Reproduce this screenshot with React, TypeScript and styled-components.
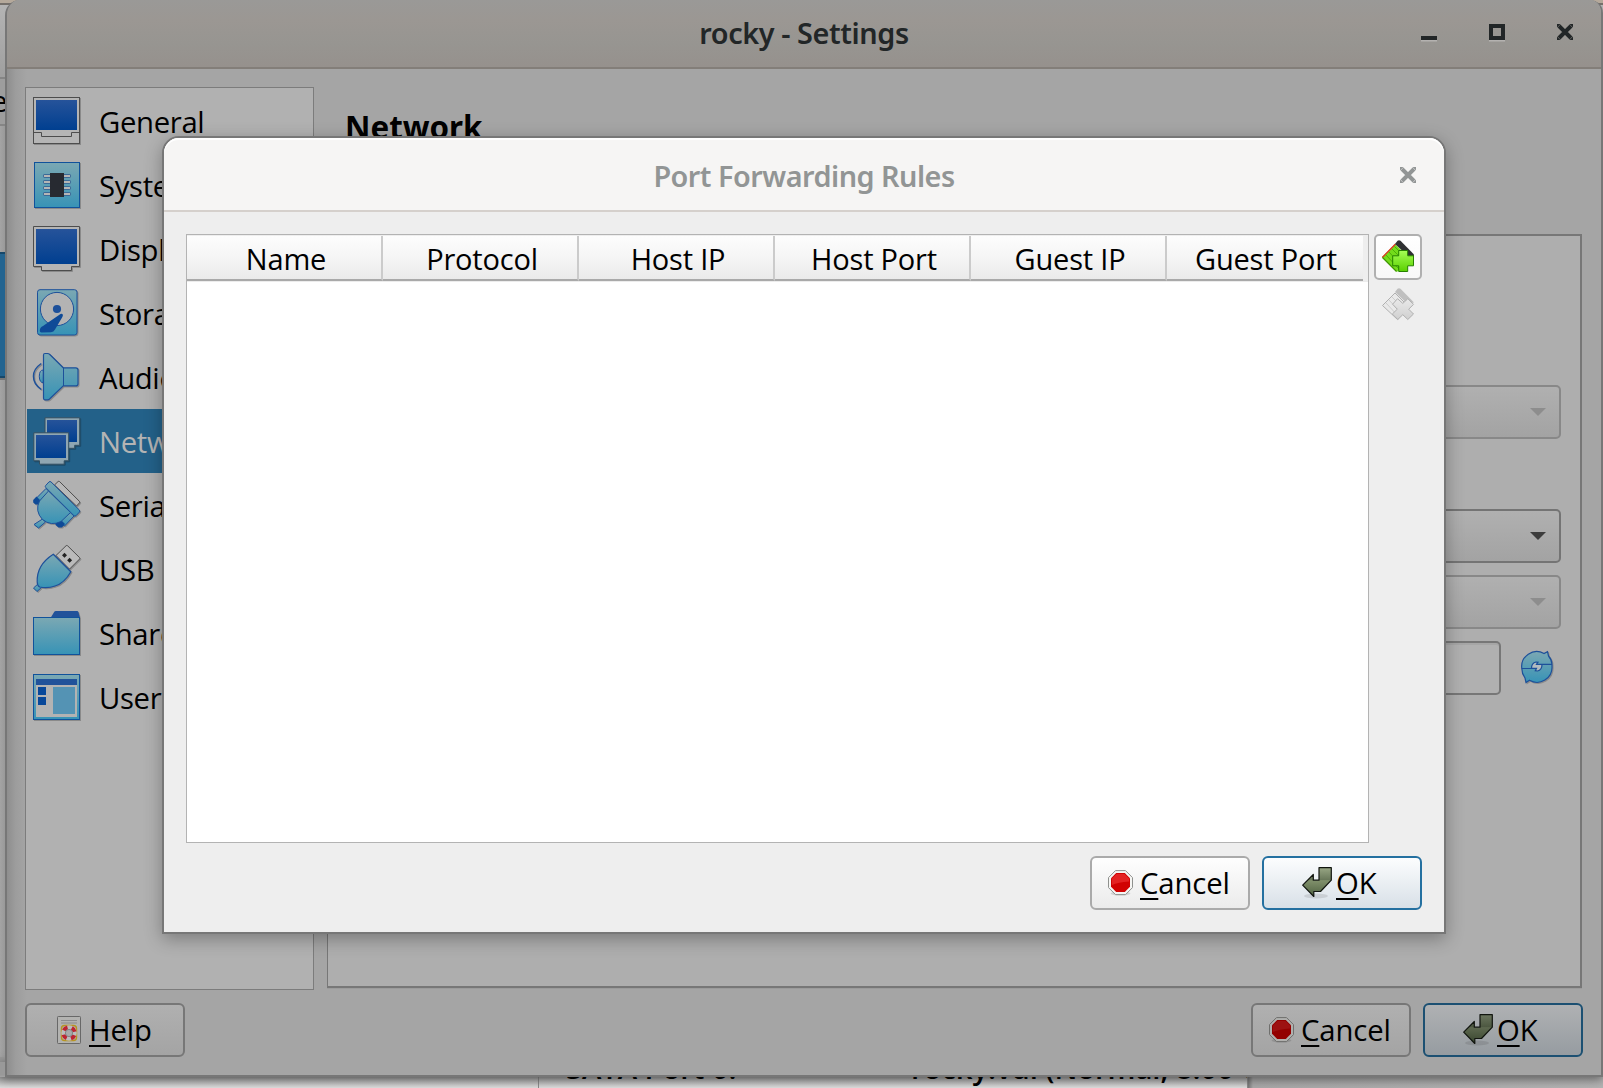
import React from 'react';
import styled, { createGlobalStyle, css } from 'styled-components';

const GlobalStyle = createGlobalStyle`
  * { box-sizing: border-box; }
  body { margin: 0; overflow: hidden; background: #9d9d9d; }
`;

const uiFont = css`
  font-family: 'Open Sans', 'Noto Sans', sans-serif;
  font-size: 29.3px;
  font-weight: 460;
  line-height: 40px;
  color: #000;
  white-space: nowrap;
`;

const Desktop = styled.main`
  position: relative;
  width: 1603px;
  height: 1088px;
  overflow: hidden;
  ${uiFont}
`;

/* ---------- window behind ---------- */

const Manager = styled.section`
  display: flex;
  flex-direction: column;
  height: 1088px;
  background: linear-gradient(90deg, #a4a4a4 0, #999 5px, #999 1598px, #a4a4a4 100%);
`;
const ManagerEdge = styled.div`
  height: 5px;
  background: #b5a99b;
  border-bottom: 2px solid #75706b;
`;
const ManagerToolbar = styled.div`
  height: 74px;
  background: linear-gradient(#b4b4b4, #9f9f9f);
  border-bottom: 2px solid #858585;
`;
const ManagerHeading = styled.div`
  display: flex;
  height: 47px;
  padding-top: 2px;
  margin-left: -9px;
  background: #9d9d9d;
  border-bottom: 2px solid #858585;
`;
const ManagerSelection = styled.div`
  width: 8px;
  height: 126px;
  margin: 126px 0 auto;
  background: #236490;
  border: solid #17486a;
  border-width: 2px 0;
  box-shadow: 0 2px 0 #777;
`;
const ManagerDetails = styled.div`
  display: grid;
  grid-template-columns: 538px 709px 1fr;
  height: 31px;
`;
const Pane = styled.div<{ $dark?: boolean }>`
  display: flex;
  align-items: flex-start;
  padding-left: 27px;
  background: ${(p) =>
    p.$dark
      ? 'linear-gradient(90deg, #777 0, #a9a9a9 5px, #b4b4b4)'
      : 'linear-gradient(#999 18px, #dedede)'};
  & + & {
    border-left: 1px solid #8b8b8b;
  }
`;
const Detail = styled.span<{ $w: number }>`
  flex: none;
  width: ${(p) => p.$w}px;
  margin-top: -9px;
  font-weight: 540;
  letter-spacing: -0.1px;
`;

/* ---------- settings window ---------- */

const SettingsWindow = styled.section`
  position: absolute;
  top: 0;
  left: 5px;
  width: 1598px;
  height: 1077px;
  display: flex;
  flex-direction: column;
  border: solid #777;
  border-width: 0 2px 2px;
  border-radius: 15px 13px 0 0;
  overflow: hidden;
  background: linear-gradient(90deg, #8e8e8e 0, #9d9d9d 9px, #a5a5a5 20px);
`;
const WindowShadow = styled.div`
  position: absolute;
  top: 1062px;
  left: 0;
  width: 1603px;
  height: 15px;
  box-shadow: 0 2px 11px rgba(0, 0, 0, 0.5);
`;
const TitleBar = styled.header`
  display: grid;
  grid-template-columns: 1fr auto 1fr;
  align-items: center;
  height: 69px;
  padding: 0 28px 3px;
  border-bottom: 2px solid #837e79;
  background: linear-gradient(#9a9997, #9b9793 30%, #979591 65%, #96918d);
`;
const Title = styled.h1<{ $muted?: boolean; $track: number }>`
  grid-column: 2;
  margin: 0;
  padding-top: ${(p) => (p.$muted ? 2 : 1)}px;
  font: 630 28.8px/40px 'Noto Sans', 'Open Sans', sans-serif;
  letter-spacing: ${(p) => p.$track}px;
  color: ${(p) => (p.$muted ? '#929595' : '#222627')};
`;
const Controls = styled.div`
  display: flex;
  justify-content: flex-end;
  gap: 52px;
  height: 16px;
  align-self: center;
`;
const ControlIcon = styled.svg`
  display: block;
  width: 16px;
  height: 18px;
  overflow: visible;
`;
const Body = styled.div`
  flex: 1;
  display: flex;
  flex-direction: column;
  gap: 13px;
  padding: 18px;
`;
const Columns = styled.div`
  display: flex;
  gap: 13px;
  height: 903px;
`;
const Categories = styled.ul`
  flex: none;
  width: 289px;
  margin: 0;
  padding: 1px;
  list-style: none;
  border: 1px solid #7c7c7c;
  background: #b1b1b1;
`;
const Category = styled.li<{ $selected?: boolean }>`
  display: flex;
  align-items: center;
  gap: 18px;
  height: 64px;
  padding-left: 6px;
  background: ${(p) => (p.$selected ? '#236189' : 'transparent')};
  color: ${(p) => (p.$selected ? '#b4b4b4' : '#000')};
`;
const CategoryName = styled.span`
  padding-top: 1px;
  letter-spacing: -0.35px;
`;
const Icon48 = styled.svg`
  flex: none;
  width: 48px;
  height: 48px;
  overflow: visible;
  filter: drop-shadow(1px 1px 0 rgba(0, 0, 0, 0.22));
`;
const Page = styled.div`
  flex: 1;
  display: flex;
  flex-direction: column;
  padding: 0 1px 2px 0;
`;
const PageTitle = styled.h2`
  height: 147px;
  margin: 0;
  padding: 20px 0 0 18px;
  font: 700 31.3px/40px 'Noto Sans', 'Open Sans', sans-serif;
`;
const Panel = styled.div`
  flex: 1;
  display: flex;
  flex-direction: column;
  gap: 12px;
  padding: 149px 19px 0 170px;
  border: solid #777;
  border-width: 2px 2px 2px 1px;
  background: #aeaeae;
  box-shadow: 0 1px 0 #9c9c9c;
`;
const Combo = styled.div<{ $disabled?: boolean; $after?: number }>`
  display: flex;
  align-items: center;
  justify-content: flex-end;
  height: 54px;
  margin-bottom: ${(p) => p.$after ?? 0}px;
  padding-right: 13px;
  border: 2px solid ${(p) => (p.$disabled ? '#888' : '#747474')};
  border-radius: 5px;
  background: linear-gradient(#b0b0b0, #a3a3a3);
`;
const Arrow = styled.i<{ $disabled?: boolean }>`
  border: solid transparent;
  border-width: 8px 8px 0;
  border-top-color: ${(p) => (p.$disabled ? '#8d8d8d' : '#3c3c3c')};
`;
const MacRow = styled.div`
  display: flex;
  align-items: center;
  gap: 20px;
  padding-right: 8px;
`;
const MacField = styled.div`
  flex: 1;
  height: 54px;
  border: 2px solid #777;
  border-radius: 5px;
  background: #b0b0b0;
  box-shadow: inset 0 2px 0 #a6a6a6;
`;
const Icon32 = styled.svg`
  display: block;
  flex: none;
  width: 32px;
  height: 32px;
  overflow: visible;
`;
const RefreshGlyph = styled(Icon32)`
  margin-bottom: 2px;
  filter: drop-shadow(1px 1px 0 rgba(0, 0, 0, 0.2));
`;
const Footer = styled.footer`
  display: flex;
  gap: 12px;
`;
const Spacer = styled.div`
  flex: 1;
`;

const tones = {
  dim: { border: '#777', bg: 'linear-gradient(#b0b0b0, #a4a4a4)' },
  dimPrimary: { border: '#1c5072', bg: 'linear-gradient(#afb1b3, #969ca1)' },
  lit: { border: '#aaa', bg: 'linear-gradient(#fefefe, #ebebeb)' },
  litPrimary: { border: '#2470a0', bg: 'linear-gradient(#fcfdfe, #d8e0e7)' },
};
const Button = styled.button<{ $tone: keyof typeof tones; $pad: number; $gap: number }>`
  ${uiFont}
  display: flex;
  align-items: center;
  gap: ${(p) => p.$gap}px;
  width: 160px;
  height: 54px;
  padding: 0 0 0 ${(p) => p.$pad}px;
  border: 2px solid ${(p) => tones[p.$tone].border};
  border-radius: 6px;
  background: ${(p) => tones[p.$tone].bg};
  letter-spacing: -0.15px;
`;
const Mnemonic = styled.span`
  text-decoration: underline;
  text-decoration-thickness: 2px;
  text-underline-offset: 4px;
  text-decoration-skip-ink: none;
`;

/* ---------- port forwarding dialog ---------- */

const Dialog = styled.section`
  position: absolute;
  top: 136px;
  left: 162px;
  width: 1284px;
  height: 798px;
  display: flex;
  flex-direction: column;
  border: 2px solid #777;
  border-radius: 17px 17px 0 0;
  background: #eee;
  background-clip: padding-box;
  box-shadow: 0 5px 18px rgba(0, 0, 0, 0.3);
`;
const DialogBar = styled.header`
  display: grid;
  grid-template-columns: 1fr auto 1fr;
  align-items: center;
  height: 74px;
  padding: 1px 28px 0;
  border-bottom: 2px solid #d5d0cc;
  border-radius: 15px 15px 0 0;
  background: #f6f5f4;
  box-shadow: inset 0 2px 0 #fff;
`;
const DialogBody = styled.div`
  flex: 1;
  display: flex;
  flex-direction: column;
  gap: 13px;
  padding: 22px;
`;
const RulesArea = styled.div`
  display: flex;
  gap: 5px;
  height: 609px;
`;
const Table = styled.div`
  flex: 1;
  border: 1px solid #b3b3b3;
  background: #fff;
`;
const HeaderRow = styled.div`
  display: grid;
  grid-template-columns: repeat(6, 196px) 1fr;
  height: 47px;
  padding-top: 1px;
  border-bottom: 1px solid #ececec;
  background: #eee;
`;
const HeaderCell = styled.div`
  padding: 3px 0 0 4px;
  text-align: center;
  font-size: 29px;
  letter-spacing: -0.2px;
  border-bottom: 2px solid #a9a9a9;
  background: linear-gradient(#fdfdfd, #f5f5f5 50%, #eaeaea);
  &:not(:nth-child(6)) {
    border-right: 2px solid #cbcbcb;
  }
  &:nth-child(6) {
    padding-left: 2px;
  }
`;
const Tools = styled.div`
  display: flex;
  flex-direction: column;
  gap: 2px;
  width: 48px;
`;
const ToolButton = styled.button<{ $raised?: boolean }>`
  display: flex;
  justify-content: center;
  width: 48px;
  height: 46px;
  padding: 4px 0 0;
  border: 2px solid ${(p) => (p.$raised ? '#b0b0b0' : 'transparent')};
  border-radius: 5px;
  background: ${(p) => (p.$raised ? 'linear-gradient(#fff, #f8f8f8)' : 'transparent')};
`;

/* ---------- drawings ---------- */

const INK = '#1d509a';
const SKY = 'url(#sky)';
const SCREEN = 'url(#screen)';

const Defs = styled.svg`
  position: absolute;
  width: 0;
  height: 0;
`;

const Gradients = () => (
  <Defs>
    <defs>
      <linearGradient id="sky" x1="0" y1="0" x2="0" y2="1">
        <stop offset="0" stopColor="#7ba8b3" />
        <stop offset="1" stopColor="#3793b6" />
      </linearGradient>
      <linearGradient id="screen" x1="0" y1="0" x2="0" y2="1">
        <stop offset="0" stopColor="#26539a" />
        <stop offset="1" stopColor="#003f90" />
      </linearGradient>
      <linearGradient id="leaf" x1="0" y1="0" x2="0" y2="1">
        <stop offset="0" stopColor="#a6ff56" />
        <stop offset="1" stopColor="#5ad000" />
      </linearGradient>
      <linearGradient id="ash" x1="0" y1="0" x2="0" y2="1">
        <stop offset="0" stopColor="#e9e9e9" />
        <stop offset="1" stopColor="#d0d0d0" />
      </linearGradient>
      <linearGradient id="moss" x1="0" y1="0" x2="0" y2="1">
        <stop offset="0" stopColor="#98a684" />
        <stop offset="0.42" stopColor="#69785a" />
        <stop offset="0.45" stopColor="#80906b" />
        <stop offset="1" stopColor="#4e6040" />
      </linearGradient>
      <linearGradient id="mossDim" x1="0" y1="0" x2="0" y2="1">
        <stop offset="0" stopColor="#6b755e" />
        <stop offset="0.42" stopColor="#4d5841" />
        <stop offset="0.45" stopColor="#5d684f" />
        <stop offset="1" stopColor="#38452e" />
      </linearGradient>
    </defs>
  </Defs>
);

const GeneralIcon = () => (
  <Icon48 viewBox="0 0 48 48">
    <rect x=".5" y=".5" width="46" height="46" fill="#b5b5b5" stroke="#4d4d4d" />
    <rect x="3" y="3" width="41" height="30" fill={SCREEN} />
    <path d="M.5 35.5h8v4h30v-4h8" fill="none" stroke="#4d4d4d" />
  </Icon48>
);
const SystemIcon = () => (
  <Icon48 viewBox="0 0 48 48">
    <rect x="1.5" y="1.5" width="45" height="45" fill={SKY} stroke="#10529b" />
    {[13.5, 19.5, 25.5, 31.5].map((y) => (
      <rect key={y} x="10.5" y={y} width="27" height="3" rx=".6" fill="#b5b5b5" stroke="#3a6a98" />
    ))}
    <rect x="17" y="12" width="14" height="24" fill="#272a31" />
  </Icon48>
);
const DisplayIcon = () => (
  <Icon48 viewBox="0 0 48 48">
    <path d="M.5 1.500h46v40h-8v4h-30v-4h-8z" fill="#b5b5b5" stroke="#4d4d4d" />
    <rect x="3" y="4" width="41" height="35" fill={SCREEN} />
  </Icon48>
);
const StorageIcon = () => (
  <Icon48 viewBox="0 0 48 48">
    <rect x="4.500" y=".7" width="39.500" height="45.300" rx="2.500" fill={SKY} stroke={INK} />
    <circle cx="24" cy="20" r="16.600" fill="#b3b3b3" stroke={INK} />
    <circle cx="24" cy="20" r="4.100" fill={INK} />
    <path d="M27.500 25q2.500-.9 2.400 1.300 0 1-.8 2.300L22 40.500q-1.300 2.500-4 2.700L8.500 43.500q-1.800 0-1.700-1.800.1-3.500 3.200-4.700z" fill="#0f4a97" />
  </Icon48>
);
const AudioIcon = () => (
  <Icon48 viewBox="0 0 48 48">
    <path d="M8.300 10.500Q.3 16 .5 23.300.3 31 8.300 36.500" fill="none" stroke={INK} strokeWidth="1.500" />
    <path d="M10.300 17q-4 0-4 6.300t4 6.300z" fill={SKY} stroke={INK} />
    <path d="M12 .5h2.500q1.300 0 2.300 1l13.500 13.300h12.500q2.200 0 2.200 2.200v13.700q0 2.200-2.200 2.200H30.300L16.800 45.800q-1 1-2.300 1H12q-1.500 0-1.500-1.500V2Q10.500.5 12 .5z" fill={SKY} stroke={INK} strokeWidth="1.200" />
    <path d="M30.500 15v18" stroke={INK} />
  </Icon48>
);
const NetworkIcon = () => (
  <Icon48 viewBox="0 0 48 48">
    <path d="M12 .8h34.700v27.500h-5v3H20V28h-8z" fill="#8fa6b2" stroke="#344f60" />
    <rect x="14" y="3" width="30" height="22" fill={SCREEN} />
    <path d="M.8 15.800h34.900v28h-4.500v3.400H6.500v-3.400H.8z" fill="#8fa6b2" stroke="#344f60" />
    <rect x="3" y="18" width="30" height="23" fill={SCREEN} />
  </Icon48>
);
const SerialIcon = () => (
  <Icon48 viewBox="0 0 48 48">
    <path d="M21.500 4 25 .6q.8-.7 1.600 0l19.800 19.700q.8.800 0 1.600L43.500 25z" fill="#b8b8b8" stroke="#4d4d4d" />
    <path d="m9.500 38 3 3-7 6-4.500-3.500z" fill={SKY} stroke={INK} />
    <path d="m3 17.500 10-10 5 5-10 11z" fill={SKY} stroke={INK} />
    <path d="m25 40 10-10.500 6 5.500-9.500 10z" fill={SKY} stroke={INK} />
    <path d="m3.500 15.500 5 5-2.500 3H2.500L.2 21.500V19z" fill="#0f4a97" />
    <path d="m26.500 37.500 5.500 5.500-3 3.500h-3.500L22.500 44v-3z" fill="#0f4a97" />
    <path d="M15.500 10 37.500 31.500 28 40.500Q18 45.500 9.500 38.500 1.500 30 6.500 20z" fill={SKY} stroke={INK} />
    <path d="M16 .9q1-.8 2 0L46.300 29q1 1 .2 2l-3.500 3.700q-1 .9-2 0L12.700 6.500q-.9-1 0-2z" fill={SKY} stroke={INK} />
  </Icon48>
);
const UsbIcon = () => (
  <Icon48 viewBox="0 0 48 48">
    <path d="M23 10.500 33 .8q.8-.7 1.600 0L46.500 12.500q.8.800 0 1.600l-10 10z" fill="#bababa" stroke="#4d4d4d" />
    <path d="m31.500 7.800 2.500 2.500-2.500 2.500-2.500-2.500zM36.600 12.800l2.500 2.500-2.500 2.500-2.500-2.500z" fill="#222" />
    <path d="m6 38 3.500 3.500-5.500 5-3.500-3.500z" fill={SKY} stroke={INK} />
    <path d="M20.300 9.300 37.800 26.700Q31.500 38 22 41 15 43.500 6.700 42 4.300 41 4.200 37 3.500 20 20.300 9.300z" fill={SKY} stroke={INK} strokeWidth="1.200" />
  </Icon48>
);
const FolderIcon = () => (
  <Icon48 viewBox="0 0 48 48">
    <path d="M17.500 9 21 3.200Q21.500 2 23 2h21q1.200 0 1.500 1.300L47 9z" fill="#21529a" />
    <rect x=".5" y="8.500" width="46" height="37" fill={SKY} stroke="#10529b" />
  </Icon48>
);
const UserInterfaceIcon = () => (
  <Icon48 viewBox="0 0 48 48">
    <rect x=".5" y="1.500" width="46" height="45" fill={SKY} stroke="#10529b" />
    <rect x="3" y="6" width="41" height="38" fill="#b3b3b3" />
    <path d="M3 6h41v6H3z" fill="#21529a" />
    <path d="M5 14h8v8H5zM5 24h8v8H5z" fill="#08489a" />
    <path d="M20 14h22v27H20z" fill="#5493b4" />
  </Icon48>
);

const RefreshIcon = () => (
  <RefreshGlyph viewBox="0 0 32 32">
    <path
      d="M.8 17.500A15 15 0 0 1 23 2.500L26.500.6l1 4.400Q31 9 31 13.500v2A15 15 0 0 1 8.500 29.300L5 31.500 4 27Q.8 22.500.8 17.500z"
      fill={SKY}
      stroke={INK}
      strokeWidth="1.200"
    />
    <path d="M10.500 17.300q0-5.300 4.500-6.300l2 .2-1.500 2.300H21q0 5.500-4.500 6.500l-2.200-.3 1.200-2.400z" fill="#b4bcc0" stroke={INK} strokeWidth="1.200" />
    <path d="M.8 17.500h14.500M15.500 13.400H31" stroke={INK} strokeWidth="1.100" />
  </RefreshGlyph>
);

const AddRuleIcon = () => (
  <Icon32 viewBox="0 0 32 32">
    <path d="M0 17 13 4l14 14-12 14z" fill="#73dc1b" />
    <path d="m4 15 13 14M7 12l12 13M10 9l12 12M12.500 6.500 24 18" stroke="#4cae08" />
    <path d="M.3 17.500 13.500 4" stroke="#e0352b" strokeWidth="1.300" />
    <path d="m.5 17.500 14 14" stroke="#3e9700" strokeWidth="1.200" />
    <path d="M13 4 15.500.8q1.500-1.300 3 0L32 14.500V16h-6z" fill="#2e3032" />
    <path d="M16.700 10.500h9v5.300h5.800v10h-5.800v5.700h-9v-5.700h-6v-10h6z" fill="url(#leaf)" stroke="#268000" />
  </Icon32>
);
const RemoveRuleIcon = () => (
  <Icon32 viewBox="0 0 32 32">
    <path d="M.5 17.500 13 5l12 12-9.500 14.500z" fill="#e9e9e9" stroke="#b0b0b0" />
    <path d="m4 15 13 14M7 12l12 13M10 9l12 12" stroke="#cdcdcd" />
    <path d="M13 4 15.500.8q1.500-1.300 3 0L32 14.500l-7 1z" fill="#bfbfbf" />
    <path d="m15.500 10.700 5.300 4.700 5-4.700 5.700 5.700-4.800 4.800 4.800 4.800-5.700 5.500-5-4.800-5 4.800-5.500-5.500 5-4.800-4.700-5z" fill="url(#ash)" stroke="#b0b0b0" />
  </Icon32>
);

const StopIcon = ({ dim }: { dim?: boolean }) => (
  <svg width="25" height="26" viewBox="0 0 25 26">
    <ellipse cx="12.500" cy="23.500" rx="10" ry="2" fill="#000" opacity=".12" />
    <path d="M7.500.6h10l7 7v10l-7 7h-10l-7-7v-10z" fill={dim ? '#b0b0ae' : '#f5f5f3'} stroke={dim ? '#6f6f6d' : '#8f918e'} />
    <path d="M8.200 3h8.600l5.200 5.200v8.600L16.800 22H8.200L3 16.800V8.200z" fill={dim ? '#930000' : '#d10202'} />
    <path d="M8.500 4h8l4.500 4.500v3Q10 12 4 15V8.500z" fill={dim ? '#9d1212' : '#e32222'} />
  </svg>
);
const ReturnIcon = ({ dim }: { dim?: boolean }) => (
  <svg width="30" height="32" viewBox="0 0 30 32">
    <ellipse cx="14" cy="29" rx="12" ry="2.500" fill="#000" opacity=".1" />
    <path
      d="M17 .7h12.300v12.500L18.500 24.500h-6.700v5L.7 18.200 11.300 7.500v5.700H17z"
      fill={dim ? 'url(#mossDim)' : 'url(#moss)'}
      stroke="#11150f"
      strokeWidth="1.200"
      strokeLinejoin="round"
    />
  </svg>
);
const HelpIcon = () => (
  <svg width="25" height="29" viewBox="0 0 25 29">
    <rect x=".5" y=".5" width="23" height="27" rx=".8" fill="#b3b3b1" stroke="#686868" />
    <path d="M4 4.500h16M4 7h16" stroke="#8b8b8b" />
    <rect x="4.500" y="9.500" width="15" height="15" rx="3" fill="none" stroke="#b8941f" strokeWidth="1.400" />
    <circle cx="12" cy="17" r="5.800" fill="none" stroke="#bcbcbc" strokeWidth="4" />
    <circle
      cx="12"
      cy="17"
      r="5.800"
      fill="none"
      stroke="#bd2431"
      strokeWidth="4"
      strokeDasharray="4.600 4.510"
      strokeDashoffset="-2.250"
    />
    <circle cx="12" cy="17" r="3.600" fill="#a9a9a9" stroke="#777" strokeWidth=".8" />
  </svg>
);
const CloseIcon = ({ color }: { color: string }) => (
  <ControlIcon viewBox="0 0 16 18">
    <path d="m2 2 12 12M14 2 2 14" stroke={color} strokeWidth="4" strokeLinecap="butt" />
    <path d="M0 0h3.500L0 3.500zM16 0h-3.500L16 3.500zM0 16h3.500L0 12.500zM16 16h-3.500l3.500-3.500z" fill={color} />
  </ControlIcon>
);

const categories: [string, React.FC][] = [
  ['General', GeneralIcon],
  ['System', SystemIcon],
  ['Display', DisplayIcon],
  ['Storage', StorageIcon],
  ['Audio', AudioIcon],
  ['Network', NetworkIcon],
  ['Serial Ports', SerialIcon],
  ['USB', UsbIcon],
  ['Shared Folders', FolderIcon],
  ['User Interface', UserInterfaceIcon],
];

const columns = ['Name', 'Protocol', 'Host IP', 'Host Port', 'Guest IP', 'Guest Port'];

const CancelButton = ({ dim }: { dim?: boolean }) => (
  <Button $tone={dim ? 'dim' : 'lit'} $pad={16} $gap={7}>
    <StopIcon dim={dim} />
    <span>
      <Mnemonic>C</Mnemonic>ancel
    </span>
  </Button>
);
const OkButton = ({ dim }: { dim?: boolean }) => (
  <Button $tone={dim ? 'dimPrimary' : 'litPrimary'} $pad={38} $gap={4}>
    <ReturnIcon dim={dim} />
    <span>
      <Mnemonic>O</Mnemonic>K
    </span>
  </Button>
);

export default function App() {
  return (
    <Desktop>
      <GlobalStyle />
      <Gradients />
      <Manager>
        <ManagerEdge />
        <ManagerToolbar />
        <ManagerHeading>
          <span>e</span>
        </ManagerHeading>
        <ManagerSelection />
        <ManagerDetails>
          <Pane />
          <Pane>
            <Detail $w={345}>SATA Port 0:</Detail>
            <Detail $w={400}>rocky.vdi (Normal, 8.00 GB)</Detail>
          </Pane>
          <Pane $dark />
        </ManagerDetails>
      </Manager>

      <WindowShadow />
      <SettingsWindow>
        <TitleBar>
          <Title $track={-0.4}>rocky - Settings</Title>
          <Controls>
            <ControlIcon viewBox="0 0 16 18">
              <path d="M0 12h16v4H0z" fill="#222627" />
              <path d="M0 16h16v1.500H0z" fill="#b4b2b0" />
            </ControlIcon>
            <ControlIcon viewBox="0 0 16 18">
              <path d="M0 16h16v1.500H0z" fill="#b4b2b0" />
              <path d="M2 2h12v12H2z" fill="none" stroke="#222627" strokeWidth="4" />
            </ControlIcon>
            <CloseIcon color="#222627" />
          </Controls>
        </TitleBar>
        <Body>
          <Columns>
            <Categories>
              {categories.map(([name, Glyph]) => (
                <Category key={name} $selected={name === 'Network'}>
                  <Glyph />
                  <CategoryName>{name}</CategoryName>
                </Category>
              ))}
            </Categories>
            <Page>
              <PageTitle>Network</PageTitle>
              <Panel>
                <Combo $disabled $after={58}>
                  <Arrow $disabled />
                </Combo>
                <Combo>
                  <Arrow />
                </Combo>
                <Combo $disabled>
                  <Arrow $disabled />
                </Combo>
                <MacRow>
                  <MacField />
                  <RefreshIcon />
                </MacRow>
              </Panel>
            </Page>
          </Columns>
          <Footer>
            <Button $tone="dim" $pad={30} $gap={7}>
              <HelpIcon />
              <span>
                <Mnemonic>H</Mnemonic>elp
              </span>
            </Button>
            <Spacer />
            <CancelButton dim />
            <OkButton dim />
          </Footer>
        </Body>
      </SettingsWindow>

      <Dialog>
        <DialogBar>
          <Title $muted $track={-0.5}>
            Port Forwarding Rules
          </Title>
          <Controls>
            <CloseIcon color="#929595" />
          </Controls>
        </DialogBar>
        <DialogBody>
          <RulesArea>
            <Table>
              <HeaderRow>
                {columns.map((name) => (
                  <HeaderCell key={name}>{name}</HeaderCell>
                ))}
              </HeaderRow>
            </Table>
            <Tools>
              <ToolButton $raised>
                <AddRuleIcon />
              </ToolButton>
              <ToolButton>
                <RemoveRuleIcon />
              </ToolButton>
            </Tools>
          </RulesArea>
          <Footer>
            <Spacer />
            <CancelButton />
            <OkButton />
          </Footer>
        </DialogBody>
      </Dialog>
    </Desktop>
  );
}
